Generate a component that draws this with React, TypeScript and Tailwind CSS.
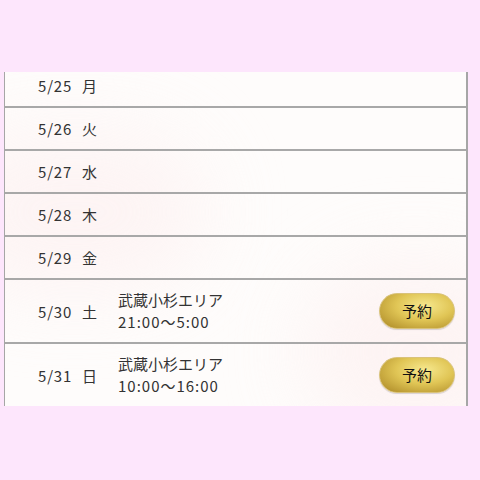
import React from "react";

type Row = { d: string; w: string; area?: string; time?: string };

const rows: Row[] = [
  { d: "5/25", w: "月" },
  { d: "5/26", w: "火" },
  { d: "5/27", w: "水" },
  { d: "5/28", w: "木" },
  { d: "5/29", w: "金" },
  { d: "5/30", w: "土", area: "武蔵小杉エリア", time: "21:00〜5:00" },
  { d: "5/31", w: "日", area: "武蔵小杉エリア", time: "10:00〜16:00" },
];

export default function App() {
  return (
    <div
      className="w-[480px] h-[480px] bg-[#fde6fc] flex flex-col"
      style={{ fontFamily: '"Noto Sans CJK JP", "Noto Sans", sans-serif' }}
    >
      <div className="h-[72px] shrink-0" />
      <div className="relative ml-[4px] w-[464px] h-[334px] overflow-hidden bg-[#fefcfb] border-l-[1.5px] border-r-2 border-[#a6a6a6]">
        <div className="absolute left-[-60px] top-[60px] w-[260px] h-[160px] rounded-full bg-[#fdf1f1] blur-2xl opacity-70" />
        <div className="absolute left-[300px] top-[190px] w-[220px] h-[180px] rounded-full bg-[#fdf0f0] blur-2xl opacity-70" />
        <div className="relative mt-[-7px] flex flex-col">
          {rows.map((r) => (
            <div
              key={r.d}
              className={`flex items-center border-b-2 border-[#a8a8a8] ${
                r.area ? "h-[64px]" : "h-[43px]"
              }`}
            >
              <div className="w-[80px] shrink-0 ml-[33px] flex text-[15px] text-[#333] leading-none">
                <span className="tracking-[0.8px]">{r.d}</span>
                <span className="ml-[10px]">{r.w}</span>
              </div>
              {r.area && (
                <>
                  <div className="flex flex-col text-[15px] leading-[22px] text-[#333]">
                    <span>{r.area}</span>
                    <span className="tracking-[1px]">{r.time}</span>
                  </div>
                  <div className="ml-auto mr-[11px] w-[76px] h-[36px] rounded-full border border-[#d9c27a] bg-[radial-gradient(ellipse_at_60%_35%,#f7e98f_0%,#e0c555_45%,#a98523_100%)] shadow-[0_1px_1px_rgba(0,0,0,0.15)] flex items-center justify-center text-[15px] text-[#111]">
                    予約
                  </div>
                </>
              )}
            </div>
          ))}
        </div>
      </div>
    </div>
  );
}
